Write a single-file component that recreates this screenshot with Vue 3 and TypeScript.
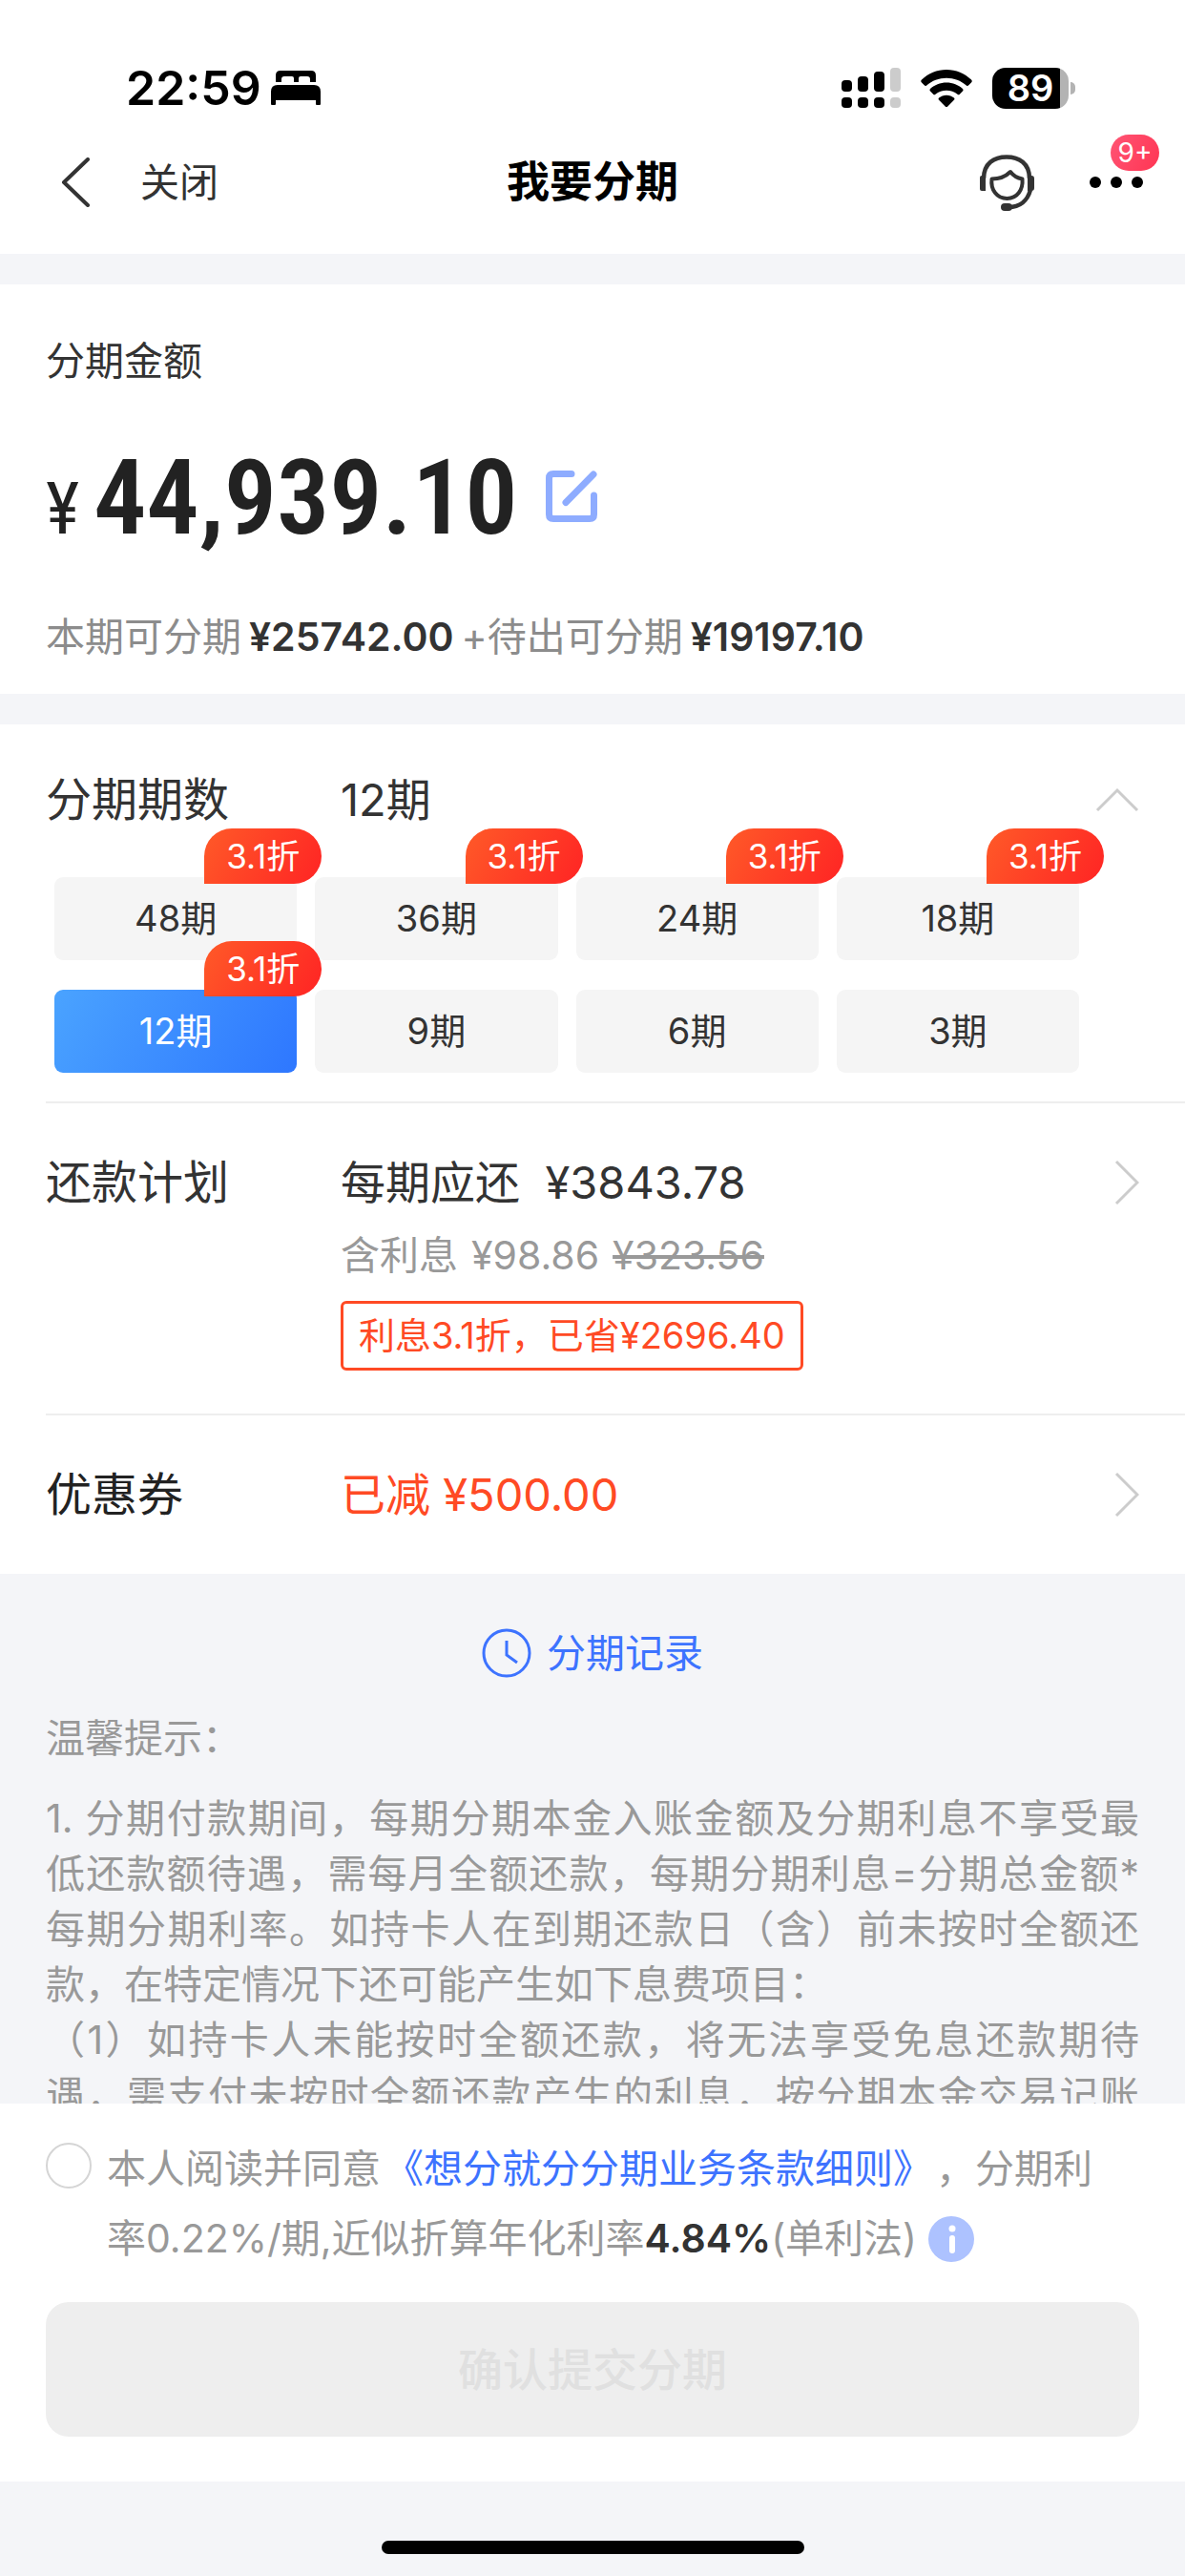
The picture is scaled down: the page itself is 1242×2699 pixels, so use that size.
<script setup lang="ts">
import { ref } from 'vue'

interface Term {
  months: number
  discount?: string
}

const terms: Term[] = [
  { months: 48, discount: '3.1折' },
  { months: 36, discount: '3.1折' },
  { months: 24, discount: '3.1折' },
  { months: 18, discount: '3.1折' },
  { months: 12, discount: '3.1折' },
  { months: 9 },
  { months: 6 },
  { months: 3 },
]
const selected = ref(12)
const agreed = ref(false)

const tips: { text: string; last?: boolean }[] = [
  { text: '1. 分期付款期间，每期分期本金入账金额及分期利息不享受最' },
  { text: '低还款额待遇，需每月全额还款，每期分期利息=分期总金额*' },
  { text: '每期分期利率。如持卡人在到期还款日（含）前未按时全额还' },
  { text: '款，在特定情况下还可能产生如下息费项目：', last: true },
  { text: '（1）如持卡人未能按时全额还款，将无法享受免息还款期待' },
  { text: '遇，需支付未按时全额还款产生的利息，按分期本金交易记账' },
]
</script>

<template>
  <div class="page">
    <header class="top">
      <div class="status">
        <div class="status-left">
          <span class="time">22:59</span>
          <svg class="bed" viewBox="0 0 52 36" width="52" height="36" aria-hidden="true">
            <path d="M5 12V5Q5 0 10 0H42Q47 0 47 5V12H41V9Q41 6 38 6H31Q29 6 29 8V12H24V8Q24 6 22 6H14Q11 6 11 9V12Z" />
            <path d="M0 22Q0 15 7 15H45Q52 15 52 22V35Q52 36 51 36H48Q47 36 47 35V31H5V35Q5 36 4 36H1Q0 36 0 35Z" />
          </svg>
        </div>
        <div class="status-right">
          <svg viewBox="0 0 62 42" width="62" height="42" aria-hidden="true">
            <rect x="0" y="13" width="11" height="12" rx="4" />
            <rect x="17" y="9" width="11" height="16" rx="4" />
            <rect x="34" y="4" width="11" height="21" rx="4" />
            <rect x="51" y="0" width="11" height="25" rx="4" fill="#ccc" />
            <rect x="0" y="31" width="11" height="11" rx="4" />
            <rect x="17" y="31" width="11" height="11" rx="4" />
            <rect x="34" y="31" width="11" height="11" rx="4" />
            <rect x="51" y="31" width="11" height="11" rx="4" fill="#ccc" />
          </svg>
          <svg viewBox="0 0 54 39" width="54" height="39" aria-hidden="true">
            <path d="M27 0C37 0 46 4 53 10.500Q54.500 12 53 13.500L50 16.500Q49 17.500 47.800 16.400C42 11.500 35 8.700 27 8.700S12 11.500 6.200 16.400Q5 17.500 4 16.500L1 13.500Q-.5 12 1 10.500C8 4 17 0 27 0Z" />
            <path d="M27 13.500C33.500 13.500 39.500 16 44 20Q45.300 21.300 44 22.600L40.800 25.800Q39.700 26.800 38.500 25.800C35.300 23 31.300 21.700 27 21.700S18.700 23 15.500 25.800Q14.300 26.800 13.200 25.800L10 22.600Q8.700 21.300 10 20C14.500 16 20.500 13.500 27 13.500Z" />
            <path d="M27 26.700C30 26.700 32.800 27.800 34.900 29.500Q36 30.600 34.900 31.800L28.300 38.400Q27 39.500 25.700 38.400L19.100 31.800Q18 30.600 19.100 29.500C21.200 27.800 24 26.700 27 26.700Z" />
          </svg>
          <div class="battery">
            <span class="battery-body">89</span>
            <span class="battery-nub"></span>
          </div>
        </div>
      </div>
      <nav class="nav">
        <div class="nav-left">
          <button class="plain back" aria-label="返回">
            <svg viewBox="0 0 30 52" width="30" height="52" aria-hidden="true">
              <path d="M28 2L3 26L28 50" fill="none" stroke="#333" stroke-width="4" stroke-linecap="round" stroke-linejoin="round" />
            </svg>
          </button>
          <button class="plain close">关闭</button>
        </div>
        <h1 class="title">我要分期</h1>
        <div class="nav-right">
          <button class="plain" aria-label="客服">
            <svg viewBox="0 0 58 60" width="58" height="60" aria-hidden="true">
              <g fill="none" stroke="#333" stroke-width="4.500">
                <path d="M5 26C5 10 16 3.500 29 3.500S53 10 53 26" />
                <path d="M54 38C51 49 43 56 31 56" />
                <path d="M13.500 26.500C22 26.500 28 24 33 19C36 23 40 25.500 45.500 26.500C46.500 38 40 47 29.500 47S12 38 13.500 26.500Z" stroke-linejoin="round" stroke-width="4" />
              </g>
              <path d="M3 23H7V39H3Q1 39 1 37V25Q1 23 3 23ZM51 23H55Q58 23 58 26V36Q58 39 55 39H51Z" fill="#333" />
              <rect x="23" y="52" width="12" height="8" rx="4" fill="#333" />
            </svg>
          </button>
          <button class="plain more" aria-label="更多">
            <svg viewBox="0 0 56 12" width="56" height="12" aria-hidden="true">
              <circle cx="6" cy="6" r="6" /><circle cx="28" cy="6" r="6" /><circle cx="50" cy="6" r="6" />
            </svg>
            <span class="count">9+</span>
          </button>
        </div>
      </nav>
    </header>

    <main class="content">
      <section class="card amount">
        <h2 class="label">分期金额</h2>
        <div class="amount-row">
          <p class="money"><span class="yen">¥</span><span class="figure">44,939.10</span></p>
          <button class="plain edit" aria-label="修改金额">
            <svg viewBox="0 0 54 54" width="54" height="54" aria-hidden="true">
              <path d="M27 3.500H8Q3.500 3.500 3.500 8V46Q3.500 50.500 8 50.500H46Q50.500 50.500 50.500 46V26M50 4L21 33.500" fill="none" stroke="#8eacff" stroke-width="7" stroke-linecap="round" />
            </svg>
          </button>
        </div>
        <p class="split">
          <span>本期可分期</span><strong>¥25742.00</strong><span>+待出可分期</span><strong>¥19197.10</strong>
        </p>
      </section>

      <section class="card">
        <div class="terms">
          <div class="row">
            <h2 class="name">分期期数</h2>
            <span class="value">{{ selected }}期</span>
            <button class="plain arrow" aria-label="收起">
              <svg viewBox="0 0 46 26" width="46" height="26" aria-hidden="true">
                <path d="M2 24L23 3L44 24" fill="none" stroke="#ccc" stroke-width="3" />
              </svg>
            </button>
          </div>
          <div class="chips">
            <button
              v-for="term in terms"
              :key="term.months"
              class="chip"
              :class="{ active: term.months === selected }"
              @click="selected = term.months"
            >
              {{ term.months }}期
              <span v-if="term.discount" class="off">{{ term.discount }}</span>
            </button>
          </div>
        </div>

        <div class="plan">
          <div class="row">
            <h2 class="name">还款计划</h2>
            <span class="value">每期应还&nbsp;&nbsp;¥3843.78</span>
            <button class="plain arrow" aria-label="查看还款计划">
              <svg viewBox="0 0 26 48" width="26" height="48" aria-hidden="true">
                <path d="M2 2L24 24L2 46" fill="none" stroke="#ccc" stroke-width="3" />
              </svg>
            </button>
          </div>
          <div class="detail">
            <p class="interest"><span>含利息</span><span>¥98.86</span><s>¥323.56</s></p>
            <p class="saving">利息3.1折，已省¥2696.40</p>
          </div>
        </div>

        <div class="coupon row">
          <h2 class="name dark">优惠券</h2>
          <span class="value red">已减 ¥500.00</span>
          <button class="plain arrow" aria-label="查看优惠券">
            <svg viewBox="0 0 26 48" width="26" height="48" aria-hidden="true">
              <path d="M2 2L24 24L2 46" fill="none" stroke="#ccc" stroke-width="3" />
            </svg>
          </button>
        </div>
      </section>

      <section class="notes">
        <a class="record" href="#record">
          <svg viewBox="0 0 52 52" width="52" height="52" aria-hidden="true">
            <g fill="none" stroke="#3d73ff" stroke-width="3">
              <circle cx="26" cy="26" r="24" />
              <path d="M26 13V28L37 36" />
            </g>
          </svg>
          分期记录
        </a>
        <h2 class="tips-title">温馨提示：</h2>
        <p class="tips">
          <span v-for="line in tips" :key="line.text" class="line" :class="{ last: line.last }">{{ line.text }}</span>
        </p>
      </section>
    </main>

    <footer class="bottom">
      <div class="agree">
        <input id="agree" v-model="agreed" type="checkbox" class="tick" />
        <div class="terms-text">
          <p class="terms-line">
            <label for="agree">本人阅读并同意</label><a class="rules" href="#rules">《想分就分分期业务条款细则》</a><span>，分期利</span>
          </p>
          <p class="terms-line">
            <span>率0.22%/期,近似折算年化利率</span><strong>4.84%</strong><span>(单利法)</span>
            <button class="plain info" aria-label="说明">
              <svg viewBox="0 0 48 48" width="48" height="48" aria-hidden="true">
                <circle cx="24" cy="24" r="24" fill="#adc2ff" />
                <circle cx="25" cy="13" r="3.500" fill="#fff" />
                <rect x="22" y="20" width="6" height="19" rx="3" fill="#fff" />
              </svg>
            </button>
          </p>
        </div>
      </div>
      <button class="submit" :disabled="!agreed">确认提交分期</button>
    </footer>
    <div class="home"><span class="home-bar"></span></div>
  </div>
</template>

<style>
body {
  margin: 0;
  background: #f4f5f8;
}
</style>

<style scoped>
.page {
  display: flex;
  flex-direction: column;
  height: 100vh;
  background: #f4f5f8;
  color: #333;
  font-family: Inter, "Noto Sans CJK SC", sans-serif;
  font-size: 41px;
  line-height: 58px;
  text-spacing-trim: space-all;
}
h1, h2, p {
  margin: 0;
  font-weight: 400;
  font-size: inherit;
}
svg {
  display: block;
}
a {
  color: #3d73ff;
  text-decoration: none;
}
button {
  font-family: inherit;
  color: inherit;
}
.plain {
  padding: 0;
  border: 0;
  background: none;
  font-size: inherit;
  line-height: inherit;
}
.top,
.card,
.bottom {
  background: #fff;
}
.top,
.bottom,
.home {
  flex: none;
}
.status {
  display: flex;
  justify-content: space-between;
  align-items: center;
  height: 68px;
  padding: 58px 115px 0 132px;
  color: #000;
}
.status-left {
  display: flex;
  align-items: center;
  gap: 10px;
}
.time {
  font-size: 50px;
  font-weight: 600;
}
.status-right {
  display: flex;
  align-items: center;
  gap: 21px;
}
.battery {
  display: flex;
  align-items: center;
  gap: 2px;
}
.battery-body {
  box-sizing: border-box;
  width: 80px;
  height: 43px;
  border-radius: 14px;
  background: linear-gradient(to right, #000 71px, #b3b3b3 71px);
  color: #fff;
  font-size: 38px;
  font-weight: 600;
  line-height: 43px;
  text-align: center;
}
.battery-nub {
  width: 5px;
  height: 13px;
  border-radius: 0 5px 5px 0;
  background: #b3b3b3;
}
.nav {
  display: grid;
  grid-template-columns: 1fr auto 1fr;
  align-items: center;
  height: 130px;
  padding: 0 44px 10px 64px;
}
.nav-left {
  display: flex;
  align-items: center;
  gap: 53px;
}
.title {
  margin-right: 20px;
  color: #000;
  font-size: 45px;
  font-weight: 600;
}
.nav-right {
  display: flex;
  justify-content: flex-end;
  align-items: center;
  gap: 58px;
}
.more {
  position: relative;
}
.count {
  position: absolute;
  right: -17px;
  bottom: 18px;
  width: 51px;
  height: 38px;
  border-radius: 19px;
  background: linear-gradient(120deg, #ff5474, #ff3553);
  color: #fff;
  font-size: 28px;
  line-height: 38px;
}
.content {
  flex: 1;
  min-height: 0;
  overflow: hidden;
}
.card {
  margin-top: 32px;
}
.amount {
  padding: 51px 48px 31px;
}
.amount-row {
  display: flex;
  align-items: center;
  gap: 29px;
  height: 120px;
  margin: 53px 0 58px;
}
.money {
  display: flex;
  align-items: baseline;
  gap: 15px;
  padding-top: 14px;
  color: #222;
  font-family: "Roboto Condensed", Roboto, sans-serif;
  line-height: 120px;
}
.yen {
  font-size: 76px;
}
.figure {
  font-size: 110px;
  font-weight: 600;
}
.split {
  display: flex;
  gap: 8px;
  color: #8c8c8c;
}
strong {
  color: #333;
  font-weight: 600;
}
.row {
  display: flex;
  align-items: center;
  height: 66px;
  font-size: 47px;
}
.name {
  width: 309px;
  font-size: 48px;
}
.value {
  flex: 1;
}
.dark {
  color: #222;
}
.red {
  color: #ff4a24;
}
.terms {
  padding: 46px 48px 30px;
}
.chips {
  display: grid;
  grid-template-columns: repeat(4, 1fr);
  gap: 31px 19px;
  margin: 48px 63px 0 9px;
}
.chip {
  position: relative;
  height: 87px;
  padding: 0;
  border: 0;
  border-radius: 9px;
  background: #f5f5f5;
  font-size: 38px;
  line-height: 87px;
}
.chip.active {
  background: linear-gradient(120deg, #4aa3ff, #2e77ff);
  color: #fff;
}
.off {
  position: absolute;
  top: -51px;
  right: -26px;
  width: 123px;
  height: 58px;
  border-radius: 29px 29px 29px 0;
  background: linear-gradient(120deg, #ff5a28, #ff2424);
  color: #fff;
  font-size: 35px;
  line-height: 58px;
}
.plan,
.coupon {
  margin-left: 48px;
  padding-right: 48px;
  border-top: 2px solid #eee;
}
.plan {
  padding-top: 50px;
  padding-bottom: 45px;
}
.detail {
  padding-left: 309px;
}
.interest {
  display: flex;
  gap: 14px;
  margin: 14px 0 19px;
  color: #999;
}
.saving {
  display: inline-block;
  padding: 0 16px;
  border: 3px solid #ff4a24;
  border-radius: 6px;
  color: #ff4a24;
  font-size: 38px;
  line-height: 67px;
  vertical-align: top;
}
.coupon {
  height: 166px;
}
.notes {
  padding: 54px 48px 0;
  color: #999;
}
.record {
  display: flex;
  justify-content: center;
  align-items: center;
  gap: 16px;
}
.tips-title {
  margin: 31px 0 26px;
}
.line {
  display: block;
  white-space: nowrap;
  text-align: justify;
  text-align-last: justify;
}
.line.last {
  text-align-last: left;
}
.bottom {
  padding: 32px 48px 47px;
}
.agree {
  display: flex;
  align-items: flex-start;
  gap: 16px;
  color: #999;
}
.tick {
  flex: none;
  box-sizing: border-box;
  width: 48px;
  height: 48px;
  margin: 9px 0 0;
  border: 2px solid #d5d5d5;
  border-radius: 50%;
  background: #fff;
  appearance: none;
}
.tick:checked {
  border: 14px solid #3d73ff;
}
.terms-line {
  display: flex;
  align-items: center;
  line-height: 73px;
}
.rules {
  margin: 0 4px;
}
.info {
  margin-left: 12px;
}
.submit {
  display: block;
  width: 100%;
  height: 141px;
  margin-top: 30px;
  padding: 0;
  border: 0;
  border-radius: 24px;
  background: #3d73ff;
  color: #fff;
  font-size: 47px;
  font-weight: 500;
  line-height: 141px;
}
.submit:disabled {
  background: #eee;
  color: #e0e0e0;
}
.home {
  display: flex;
  justify-content: center;
  padding: 62px 0 23px;
}
.home-bar {
  width: 443px;
  height: 14px;
  border-radius: 7px;
  background: #000;
}
</style>
